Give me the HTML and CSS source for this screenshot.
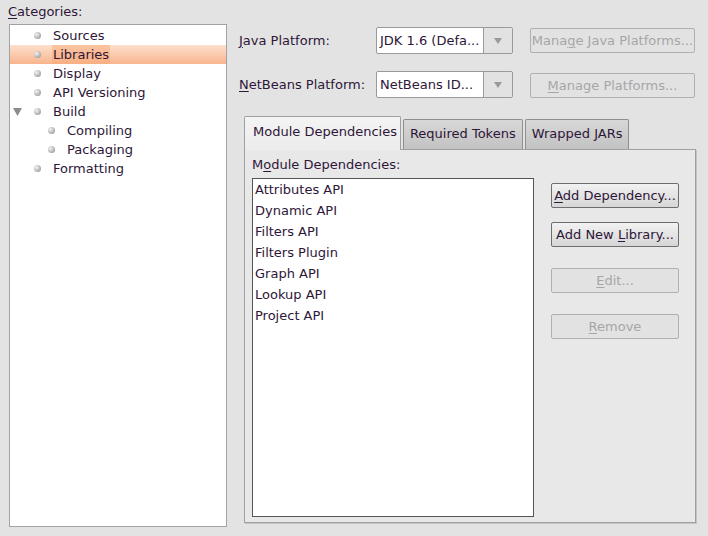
FILE: index.html
```html
<!DOCTYPE html>
<html>
<head>
<meta charset="utf-8">
<link rel="stylesheet" href="styles.css">
</head>
<body>
<div class="root">
  <div class="left">
    <div class="cat-label"><u>C</u>ategories:</div>
    <div class="tree">
      <div class="node"><span class="exp"></span><span class="dot"></span><span class="txt">Sources</span></div>
      <div class="node sel"><span class="exp"></span><span class="dot"></span><span class="txt">Libraries</span></div>
      <div class="node"><span class="exp"></span><span class="dot"></span><span class="txt">Display</span></div>
      <div class="node"><span class="exp"></span><span class="dot"></span><span class="txt">API Versioning</span></div>
      <div class="node"><span class="exp"><svg width="9" height="8" viewBox="0 0 9 8"><path d="M0 0H9L4.5 8Z" fill="#8c8c8c"/></svg></span><span class="dot"></span><span class="txt">Build</span></div>
      <div class="node child"><span class="exp"></span><span class="dot"></span><span class="txt">Compiling</span></div>
      <div class="node child"><span class="exp"></span><span class="dot"></span><span class="txt">Packaging</span></div>
      <div class="node"><span class="exp"></span><span class="dot"></span><span class="txt">Formatting</span></div>
    </div>
  </div>
  <div class="right">
    <div class="form">
      <div class="flabel"><u>J</u>ava Platform:</div>
      <div class="combo"><div class="combo-text">JDK 1.6 (Defa...</div><div class="combo-btn"><svg width="8" height="6" viewBox="0 0 8 6"><path d="M0 0H8L4 6Z" fill="#9a9a9a"/></svg></div></div>
      <div class="btn disabled b1">Mana<u>g</u>e Java Platforms...</div>
      <div class="flabel"><u>N</u>etBeans Platform:</div>
      <div class="combo"><div class="combo-text">NetBeans ID...</div><div class="combo-btn"><svg width="8" height="6" viewBox="0 0 8 6"><path d="M0 0H8L4 6Z" fill="#9a9a9a"/></svg></div></div>
      <div class="btn disabled b2"><u>M</u>anage Platforms...</div>
    </div>
    <div class="tabs">
      <div class="tabstrip">
        <div class="tab active">Module Dependencies</div>
        <div class="tab">Required Tokens</div>
        <div class="tab">Wrapped JARs</div>
      </div>
      <div class="panel">
        <div class="plabel">M<u>o</u>dule Dependencies:</div>
        <div class="pbody">
          <div class="list">
            <div class="item">Attributes API</div>
            <div class="item">Dynamic API</div>
            <div class="item">Filters API</div>
            <div class="item">Filters Plugin</div>
            <div class="item">Graph API</div>
            <div class="item">Lookup API</div>
            <div class="item">Project API</div>
          </div>
          <div class="actions">
            <div class="btn"><u>A</u>dd Dependency...</div>
            <div class="btn">Add New <u>L</u>ibrary...</div>
            <div class="btn disabled gap"><u>E</u>dit...</div>
            <div class="btn disabled gap"><u>R</u>emove</div>
          </div>
        </div>
      </div>
    </div>
  </div>
</div>
</body>
</html>
```
FILE: styles.css
```css
html, body {
  margin: 0;
  padding: 0;
  background: #e3e3e3;
}
body {
  font-family: "DejaVu Sans", sans-serif;
  font-size: 13px;
  color: #2e1638;
}
u {
  text-decoration: underline;
  text-underline-offset: 2px;
}
.root {
  display: flex;
  height: 536px;
}
.left {
  width: 227px;
  display: flex;
  flex-direction: column;
}
.cat-label {
  padding: 4px 0 0 8px;
  line-height: 16px;
  height: 16px;
}
.tree {
  margin: 4px 0 0 9px;
  width: 216px;
  height: 500px;
  background: #fff;
  border: 1px solid #a2a2a2;
  padding-top: 1px;
  box-sizing: content-box;
}
.node {
  display: flex;
  align-items: center;
  height: 19px;
  line-height: 19px;
}
.node .exp {
  width: 24px;
  padding-left: 3px;
  display: flex;
  align-items: center;
  justify-content: flex-start;
  box-sizing: border-box;
}
.node .dot {
  width: 7px;
  height: 7px;
  border-radius: 50%;
  background: radial-gradient(circle at 35% 35%, #f4f4f4, #a8a8a8 70%, #8a8a8a);
  margin-right: 11px;
  flex: none;
}
.node.child .exp {
  width: 38px;
}
.node .txt {
  padding: 0 1px;
}
.node.sel {
  background: linear-gradient(#fde0cc, #f9b48e);
}
.node.sel .txt {
  background: rgba(248, 170, 120, 0.5);
}
.right {
  flex: 1;
  padding-left: 12px;
  display: flex;
  flex-direction: column;
}
.form {
  display: grid;
  grid-template-columns: 137px 137px 182px;
  grid-auto-rows: 27px;
  row-gap: 17px;
  padding-top: 27px;
  align-items: center;
}
.flabel {
  line-height: 27px;
}
.combo {
  display: flex;
  height: 27px;
  box-sizing: border-box;
  border: 1px solid #9a9a9a;
  border-radius: 2px;
  background: #fff;
}
.combo-text {
  flex: 1;
  line-height: 25px;
  padding-left: 3px;
  white-space: nowrap;
  overflow: hidden;
  border-right: 1px solid #9a9a9a;
}
.combo-btn {
  width: 28px;
  background: #e2e2e2;
  display: flex;
  align-items: center;
  justify-content: center;
}
.btn {
  box-sizing: border-box;
  height: 25px;
  line-height: 23px;
  border: 1px solid #6e6e6e;
  border-radius: 2px;
  background: linear-gradient(#f2f2f2, #d6d6d6);
  text-align: center;
  white-space: nowrap;
}
.btn.disabled {
  border-color: #b0b0b0;
  background: #e2e2e2;
  color: #a6a6a6;
}
.b1 {
  margin-left: 17px;
  width: 165px;
  align-self: center;
}
.b2 {
  margin-left: 17px;
  width: 165px;
  align-self: end;
}
.tabs {
  margin: 18px 0 0 5px;
  width: 452px;
  display: flex;
  flex-direction: column;
}
.tabstrip {
  display: flex;
  align-items: flex-end;
  height: 33px;
  position: relative;
  z-index: 1;
}
.tab {
  box-sizing: border-box;
  height: 30px;
  line-height: 28px;
  padding: 0 6px;
  border: 1px solid #8e8e8e;
  border-bottom: none;
  border-radius: 2px 2px 0 0;
  background: linear-gradient(#d8d8d8, #c2c2c2);
  margin-right: 2px;
}
.tab.active {
  height: 34px;
  margin-bottom: -1px;
  line-height: 30px;
  padding: 0 3px 0 8px;
  background: linear-gradient(#f4f4f4, #ececec);
  border-color: #a0a0a0;
  margin-right: 2px;
}
.panel {
  box-sizing: border-box;
  height: 374px;
  border: 1px solid #a0a0a0;
  background: #e8e8e8;
  box-shadow: 1px 1px 0 #c4c4c4;
  padding: 7px 0 5px 7px;
  display: flex;
  flex-direction: column;
}
.plabel {
  line-height: 16px;
  height: 16px;
  margin-bottom: 5px;
}
.pbody {
  flex: 1;
  display: flex;
}
.list {
  width: 282px;
  box-sizing: border-box;
  border: 1px solid #555;
  background: #fff;
}
.item {
  height: 21px;
  line-height: 21px;
  padding-left: 2px;
}
.actions {
  margin-left: 17px;
  padding-top: 5px;
  width: 128px;
  display: flex;
  flex-direction: column;
  gap: 14px;
}
.actions .btn.gap {
  margin-top: 7px;
}
```
